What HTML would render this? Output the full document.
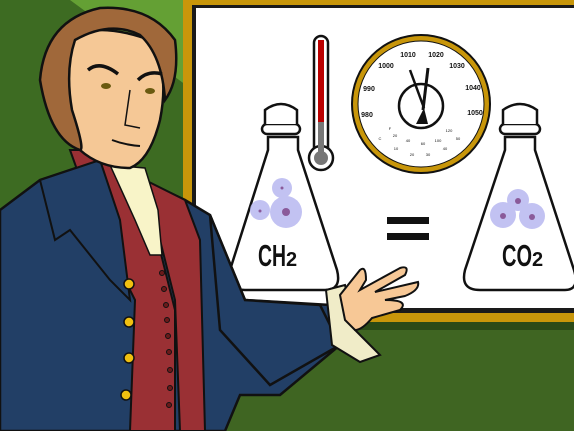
<!DOCTYPE html>
<html><head><style>html,body{margin:0;padding:0;width:574px;height:431px;overflow:hidden}svg{display:block}text{font-family:"Liberation Sans",sans-serif}</style></head>
<body>
<svg width="574" height="431" viewBox="0 0 574 431" xmlns="http://www.w3.org/2000/svg">
<rect width="574" height="431" fill="#3f6522"/>
<rect x="0" y="0" width="190" height="330" fill="#3d6b22"/>
<polygon points="70,0 190,0 190,88" fill="#64a034"/>
<rect x="183" y="320" width="391" height="10" fill="#2b4a17"/>
<!-- board -->
<rect x="183" y="0" width="391" height="322" fill="#c8960a"/>
<rect x="192" y="5" width="382" height="308" fill="#1a1a1a"/>
<rect x="196" y="8" width="378" height="300" fill="#ffffff"/>
<!-- thermometer -->
<rect x="314" y="36" width="14" height="120" rx="7" fill="#fff" stroke="#111" stroke-width="2.5"/>
<circle cx="321" cy="158" r="12" fill="#fff" stroke="#111" stroke-width="2.5"/>
<rect x="318" y="40" width="6" height="82" fill="#b00"/>
<rect x="318" y="122" width="6" height="30" fill="#777"/>
<circle cx="321" cy="158" r="7" fill="#777"/>
<!-- gauge -->
<circle cx="421" cy="104" r="69" fill="#c8960a" stroke="#111" stroke-width="2"/>
<circle cx="421" cy="104" r="63" fill="#fff" stroke="#111" stroke-width="1"/>
<circle cx="421" cy="106" r="22" fill="#fff" stroke="#111" stroke-width="2.5"/>
<path d="M410 70 L424 108" stroke="#111" stroke-width="2.5"/>
<path d="M428 68 L423 110" stroke="#111" stroke-width="3"/>
<path d="M416 124 L424 108 L428 124 Z" fill="#111"/>
<g font-size="7" font-weight="bold" fill="#111" text-anchor="middle">
<text x="408" y="57">1010</text><text x="436" y="57">1020</text>
<text x="386" y="68">1000</text><text x="457" y="68">1030</text>
<text x="369" y="91">990</text><text x="473" y="90">1040</text>
<text x="367" y="117">980</text><text x="475" y="115">1050</text>
</g>
<g font-size="4" fill="#111" text-anchor="middle">
<text x="380" y="140">C</text><text x="390" y="130">F</text><text x="395" y="137">20</text><text x="408" y="142">40</text><text x="423" y="145">60</text><text x="438" y="142">100</text><text x="449" y="132">120</text><text x="458" y="140">50</text><text x="396" y="150">10</text><text x="412" y="156">20</text><text x="428" y="156">30</text><text x="445" y="150">40</text>
</g>
<!-- flasks -->
<g fill="#fff" stroke="#111" stroke-width="2.5">
<path d="M268 137 L268 150 L230 270 Q226 290 245 290 L325 290 Q342 290 337 270 L298 150 L298 137 Z"/>
<rect x="262" y="124" width="38" height="10" rx="5"/>
<path d="M265 124 L265 110 Q281 98 297 110 L297 124"/>
<path d="M505 137 L505 150 L465 270 Q460 290 480 290 L565 290 Q580 290 574 270 L535 150 L535 137 Z"/>
<rect x="500" y="124" width="40" height="10" rx="5"/>
<path d="M503 124 L503 110 Q520 98 537 110 L537 124"/>
</g>
<g fill="#b8b8f0" opacity="0.85">
<circle cx="282" cy="188" r="10"/><circle cx="260" cy="210" r="10"/><circle cx="286" cy="212" r="16"/>
<circle cx="518" cy="200" r="11"/><circle cx="503" cy="215" r="13"/><circle cx="532" cy="216" r="13"/>
</g>
<g fill="#8a5a9a"><circle cx="282" cy="188" r="1.5"/><circle cx="260" cy="211" r="1.5"/><circle cx="286" cy="212" r="4"/><circle cx="518" cy="201" r="3"/><circle cx="503" cy="216" r="3"/><circle cx="532" cy="217" r="3"/></g>
<g font-weight="bold" font-size="31" fill="#111" font-family="Liberation Sans Narrow,Liberation Sans,sans-serif">
<text x="258" y="266" textLength="28" lengthAdjust="spacingAndGlyphs">CH</text><text x="286" y="266" font-size="20">2</text>
<text x="502" y="266" textLength="30" lengthAdjust="spacingAndGlyphs">CO</text><text x="532" y="266" font-size="20">2</text>
</g>
<rect x="387" y="217" width="42" height="7" fill="#111"/><rect x="387" y="233" width="42" height="7" fill="#111"/>
<!-- person: coat -->
<path d="M0 210 L40 180 L100 160 L185 200 L210 215 L245 300 L330 305 L340 345 L280 395 L240 395 L225 431 L0 431 Z" fill="#223f66" stroke="#111" stroke-width="2.5"/>
<!-- vest -->
<path d="M70 150 L110 150 L160 250 L175 310 L175 431 L130 431 L135 300 L95 220 Z" fill="#9a3034" stroke="#111" stroke-width="2"/>
<path d="M145 180 L185 200 L200 240 L205 431 L180 431 L175 300 Z" fill="#9a3034" stroke="#111" stroke-width="2"/>
<!-- cravat -->
<path d="M110 165 L145 168 L158 210 L162 255 L150 255 L135 220 Z" fill="#f8f4c8" stroke="#111" stroke-width="1.5"/>
<!-- lapel overlay -->
<path d="M100 160 L40 180 L55 240 L70 230 L110 280 L130 300 L120 220 Z" fill="#223f66" stroke="#111" stroke-width="2"/>
<!-- buttons -->
<g fill="#f0c010" stroke="#111" stroke-width="1.5"><circle cx="129" cy="284" r="5"/><circle cx="129" cy="322" r="5"/><circle cx="129" cy="358" r="5"/><circle cx="126" cy="395" r="5"/></g>
<g fill="#6a1a1a" stroke="#111" stroke-width="1"><circle cx="162" cy="273" r="2.5"/><circle cx="164" cy="289" r="2.5"/><circle cx="166" cy="305" r="2.5"/><circle cx="167" cy="320" r="2.5"/><circle cx="168" cy="336" r="2.5"/><circle cx="169" cy="352" r="2.5"/><circle cx="170" cy="370" r="2.5"/><circle cx="170" cy="388" r="2.5"/><circle cx="169" cy="405" r="2.5"/></g>
<!-- face -->
<path d="M62 40 Q95 20 150 40 Q170 70 160 120 Q150 160 130 168 Q100 168 80 150 Q60 120 58 80 Z" fill="#f5c896" stroke="#111" stroke-width="2.5"/>
<!-- hair -->
<path d="M40 80 Q45 20 100 8 Q150 5 175 40 Q180 80 165 100 Q162 55 140 35 Q110 20 75 40 Q65 70 72 110 Q85 150 80 150 Q50 140 40 80 Z" fill="#a0683a" stroke="#111" stroke-width="2.5"/>
<path d="M88 70 Q100 60 118 74" stroke="#111" stroke-width="3.5" fill="none"/>
<path d="M138 80 Q148 70 162 74" stroke="#111" stroke-width="3.5" fill="none"/>
<ellipse cx="106" cy="86" rx="5" ry="3" fill="#6a5a10"/><ellipse cx="150" cy="91" rx="5" ry="3" fill="#6a5a10"/>
<path d="M130 90 L125 125 L140 128" stroke="#111" stroke-width="1.5" fill="none"/>
<path d="M112 140 Q125 145 140 146" stroke="#111" stroke-width="2" fill="none"/>
<!-- arm -->
<path d="M210 215 L245 300 L320 305 L340 345 L270 385 L220 330 Z" fill="#223f66" stroke="#111" stroke-width="2.5"/>
<!-- cuff -->
<path d="M326 290 L345 285 L355 330 L380 355 L360 362 L332 345 Z" fill="#f0ecc8" stroke="#111" stroke-width="2"/>
<!-- hand -->
<path d="M340 295 L360 270 Q366 265 366 280 L360 290 L400 268 Q410 265 405 275 L375 292 L418 282 Q420 290 405 296 L385 300 Q410 300 400 310 L372 318 Q362 330 355 330 L345 320 Z" fill="#f7c896" stroke="#111" stroke-width="2"/>
</svg>
</body></html>
